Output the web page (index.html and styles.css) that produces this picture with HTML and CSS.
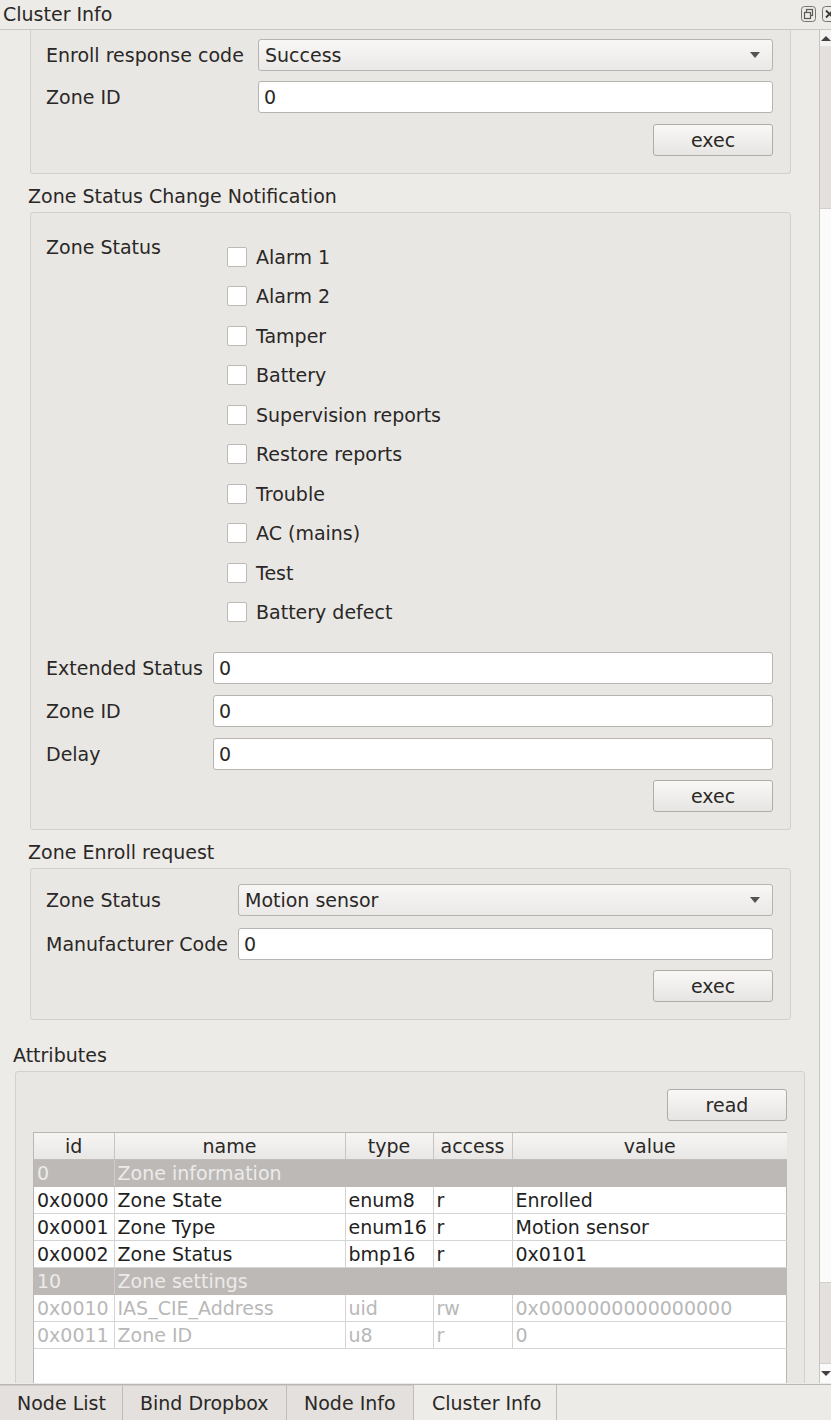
FILE: index.html
```html
<!DOCTYPE html>
<html>
<head>
<meta charset="utf-8">
<link rel="stylesheet" href="styles.css">
</head>
<body>
<div class="app">
  <div class="titlebar">
    <span class="title">Cluster Info</span>
    <div class="tb-icons">
      <svg class="tb-icon" viewBox="0 0 15 16" width="15" height="16">
        <rect x="0.5" y="0.5" width="14" height="15" rx="3" fill="none" stroke="#757270" stroke-width="1"/>
        <rect x="5.5" y="3.5" width="6" height="6" fill="none" stroke="#5a5856" stroke-width="1.2"/>
        <rect x="3.5" y="6.5" width="6" height="6" fill="#edebe8" stroke="#5a5856" stroke-width="1.2"/>
      </svg>
      <svg class="tb-icon" viewBox="0 0 15 16" width="15" height="16">
        <rect x="0.5" y="0.5" width="14" height="15" rx="3" fill="none" stroke="#757270" stroke-width="1"/>
        <path d="M4 4.5 L11 11.5 M11 4.5 L4 11.5" stroke="#3a3836" stroke-width="1.8"/>
      </svg>
    </div>
  </div>
  <div class="main">
    <div class="scrollarea">
      <div class="commands">
        <div class="group group-first">
          <div class="form-row">
            <span class="lbl lbl-w1">Enroll response code</span>
            <div class="combo"><span>Success</span><span class="arrow"></span></div>
          </div>
          <div class="form-row gap10">
            <span class="lbl lbl-w1">Zone ID</span>
            <div class="input">0</div>
          </div>
          <div class="btn-row gap11"><div class="btn">exec</div></div>
        </div>

        <div class="gtitle">Zone Status Change Notification</div>
        <div class="group group-2">
          <div class="status-row">
            <span class="lbl lbl-status">Zone Status</span>
            <div class="checklist">
              <div class="chk"><span class="box"></span>Alarm 1</div>
              <div class="chk"><span class="box"></span>Alarm 2</div>
              <div class="chk"><span class="box"></span>Tamper</div>
              <div class="chk"><span class="box"></span>Battery</div>
              <div class="chk"><span class="box"></span>Supervision reports</div>
              <div class="chk"><span class="box"></span>Restore reports</div>
              <div class="chk"><span class="box"></span>Trouble</div>
              <div class="chk"><span class="box"></span>AC (mains)</div>
              <div class="chk"><span class="box"></span>Test</div>
              <div class="chk"><span class="box"></span>Battery defect</div>
            </div>
          </div>
          <div class="form-row gap20">
            <span class="lbl lbl-w2">Extended Status</span>
            <div class="input">0</div>
          </div>
          <div class="form-row gap11">
            <span class="lbl lbl-w2">Zone ID</span>
            <div class="input">0</div>
          </div>
          <div class="form-row gap11">
            <span class="lbl lbl-w2">Delay</span>
            <div class="input">0</div>
          </div>
          <div class="btn-row gap10"><div class="btn">exec</div></div>
        </div>

        <div class="gtitle">Zone Enroll request</div>
        <div class="group group-3">
          <div class="form-row">
            <span class="lbl lbl-w3">Zone Status</span>
            <div class="combo"><span>Motion sensor</span><span class="arrow"></span></div>
          </div>
          <div class="form-row gap12">
            <span class="lbl lbl-w3">Manufacturer Code</span>
            <div class="input">0</div>
          </div>
          <div class="btn-row gap10"><div class="btn">exec</div></div>
        </div>
      </div>

      <div class="gtitle attr-title">Attributes</div>
      <div class="group group-attr">
        <div class="btn-row"><div class="btn">read</div></div>
        <div class="table-wrap">
          <table class="attr-table">
            <colgroup>
              <col class="c-id"><col class="c-name"><col class="c-type"><col class="c-access"><col class="c-value">
            </colgroup>
            <thead>
              <tr><th>id</th><th>name</th><th>type</th><th>access</th><th>value</th></tr>
            </thead>
            <tbody>
              <tr class="grp"><td>0</td><td colspan="4">Zone information</td></tr>
              <tr><td>0x0000</td><td>Zone State</td><td>enum8</td><td>r</td><td>Enrolled</td></tr>
              <tr><td>0x0001</td><td>Zone Type</td><td>enum16</td><td>r</td><td>Motion sensor</td></tr>
              <tr><td>0x0002</td><td>Zone Status</td><td>bmp16</td><td>r</td><td>0x0101</td></tr>
              <tr class="grp"><td>10</td><td colspan="4">Zone settings</td></tr>
              <tr class="dis"><td>0x0010</td><td>IAS_CIE_Address</td><td>uid</td><td>rw</td><td>0x0000000000000000</td></tr>
              <tr class="dis"><td>0x0011</td><td>Zone ID</td><td>u8</td><td>r</td><td>0</td></tr>
            </tbody>
          </table>
        </div>
      </div>
    </div>
    <div class="vscroll">
      <div class="sb-up"><span class="tri-up"></span></div>
      <div class="sb-handle"></div>
      <div class="sb-track"></div>
      <div class="sb-handle2"></div>
      <div class="sb-down"><span class="tri-down"></span></div>
    </div>
  </div>
  <div class="tabbar">
    <div class="tab tab-1">Node List</div>
    <div class="tab tab-2">Bind Dropbox</div>
    <div class="tab tab-3">Node Info</div>
    <div class="tab tab-sel">Cluster Info</div>
    <div class="tab-rest"></div>
  </div>
</div>
</body>
</html>
```

FILE: styles.css
```css
html, body {
  margin: 0;
  padding: 0;
}
body {
  background: #edebe8;
  font-family: "DejaVu Sans", sans-serif;
  font-size: 19px;
  color: #2a2826;
  width: 831px;
  height: 1420px;
  overflow: hidden;
}
.app {
  display: flex;
  flex-direction: column;
  height: 1420px;
}
.titlebar {
  height: 29px;
  border-bottom: 1px solid #c9c6c3;
  display: flex;
  align-items: center;
  justify-content: space-between;
  flex: none;
}
.title {
  padding-left: 3px;
  line-height: 22px;
  margin-top: -2px;
  white-space: nowrap;
}
.tb-icons {
  display: flex;
  gap: 6px;
  margin-right: -6px;
  margin-top: -2px;
}
.tb-icon {
  display: block;
}
.main {
  display: flex;
  height: 1353px;
  flex: none;
}
.scrollarea {
  width: 819px;
  height: 1353px;
  overflow: hidden;
  flex: none;
}
.commands {
  margin-left: 30px;
  width: 761px;
}
.group {
  border: 1px solid #d3d0cd;
  border-radius: 3px;
  background: #e9e7e4;
  box-sizing: border-box;
}
.group-first {
  border-top: none;
  border-top-left-radius: 0;
  border-top-right-radius: 0;
  padding: 9px 17px 17px 15px;
}
.group-2 {
  padding: 23px 17px 17px 15px;
}
.group-3 {
  padding: 15px 17px 17px 15px;
}
.gtitle {
  padding: 11px 0 5px 0;
  line-height: 22px;
  margin-left: -2px;
  white-space: nowrap;
}
.attr-title {
  margin-left: 13px;
  padding-top: 24px;
  padding-bottom: 5px;
}
.form-row {
  display: flex;
  align-items: center;
  height: 32px;
}
.gap10 { margin-top: 10px; }
.gap11 { margin-top: 11px; }
.gap12 { margin-top: 12px; }
.gap20 { margin-top: 20px; }
.lbl {
  flex: none;
  line-height: 22px;
  white-space: nowrap;
}
.lbl-w1 { width: 212px; }
.lbl-w2 { width: 167px; }
.lbl-w3 { width: 192px; }
.lbl-status { width: 181px; }
.combo {
  flex: 1;
  height: 32px;
  box-sizing: border-box;
  border: 1px solid #b6b3b0;
  border-radius: 3px;
  background: linear-gradient(#f8f7f6, #ebe9e7);
  display: flex;
  align-items: center;
  justify-content: space-between;
  padding: 0 12px 0 6px;
}
.arrow {
  width: 0;
  height: 0;
  border-left: 5px solid transparent;
  border-right: 5px solid transparent;
  border-top: 6px solid #555350;
}
.input {
  flex: 1;
  height: 32px;
  box-sizing: border-box;
  border: 1px solid #b6b3b0;
  border-radius: 3px;
  background: #ffffff;
  display: flex;
  align-items: center;
  padding-left: 5px;
}
.btn-row {
  display: flex;
  justify-content: flex-end;
}
.btn {
  width: 120px;
  height: 32px;
  box-sizing: border-box;
  border: 1px solid #b0ada9;
  border-radius: 3px;
  background: linear-gradient(#f9f8f7, #e7e5e3);
  display: flex;
  align-items: center;
  justify-content: center;
}
.status-row {
  display: flex;
  align-items: flex-start;
}
.checklist {
  margin-top: 1px;
  display: flex;
  flex-direction: column;
}
.chk {
  height: 39.5px;
  display: flex;
  align-items: center;
  line-height: 22px;
  white-space: nowrap;
}
.box {
  width: 20px;
  height: 20px;
  box-sizing: border-box;
  border: 1px solid #bcb9b6;
  border-radius: 2px;
  background: #ffffff;
  margin-right: 9px;
  flex: none;
}
.group-attr {
  margin-left: 15px;
  width: 790px;
  height: 600px;
  padding: 17px 17px 0 17px;
}
.table-wrap {
  margin-top: 11px;
  background: #ffffff;
  border: 1px solid #b9b6b3;
  border-bottom: none;
  height: 600px;
}
.attr-table {
  border-collapse: collapse;
  table-layout: fixed;
  width: 753px;
}
.c-id { width: 80px; }
.c-name { width: 231px; }
.c-type { width: 88px; }
.c-access { width: 79px; }
.c-value { width: 275px; }
.attr-table th {
  height: 26px;
  padding: 0;
  font-weight: normal;
  text-align: center;
  background: linear-gradient(#f6f5f4, #e9e7e5);
  border-right: 1px solid #c7c4c1;
  border-bottom: 1px solid #c0bdba;
  line-height: 22px;
}
.attr-table th:last-child { border-right: none; }
.attr-table td {
  height: 26px;
  padding: 0 0 0 3px;
  border-right: 1px solid #d4d4d4;
  border-bottom: 1px solid #d4d4d4;
  white-space: nowrap;
  overflow: hidden;
  line-height: 22px;
  color: #1f1f1f;
}
.attr-table td:last-child { border-right: none; }
.attr-table tr.grp td {
  background: #bdb9b7;
  color: #ecebea;
  border-bottom: 1px solid #bdb9b7;
  border-right: 1px solid #cfcccb;
}
.attr-table tr.grp td:last-child { border-right: none; }
.attr-table tr.dis td {
  color: #b8b8b8;
}
.vscroll {
  width: 12px;
  border-left: 1px solid #c6c3c0;
  display: flex;
  flex-direction: column;
  flex: none;
  background: #fbfbfb;
}
.sb-up {
  height: 16px;
  display: flex;
  justify-content: center;
  align-items: center;
  background: #f4f3f2;
}
.tri-up {
  width: 0; height: 0;
  border-left: 5px solid transparent;
  border-right: 5px solid transparent;
  border-bottom: 5px solid #444240;
}
.sb-handle {
  height: 162px;
  background: #e3e0de;
  border-bottom: 1px solid #d3d0ce;
}
.sb-track {
  flex: 1;
  background: #fbfbfb;
}
.sb-handle2 {
  height: 80px;
  background: #e3e0de;
  border-top: 1px solid #d3d0ce;
  border-bottom: 1px solid #d3d0ce;
}
.sb-down {
  height: 19px;
  display: flex;
  justify-content: center;
  align-items: center;
  background: #fbfbfb;
}
.tri-down {
  width: 0; height: 0;
  border-left: 5px solid transparent;
  border-right: 5px solid transparent;
  border-top: 5px solid #444240;
}
.tabbar {
  flex: 1;
  display: flex;
  border-top: 1px solid #b9b6b3;
  margin-top: 1px;
}
.tab {
  box-sizing: border-box;
  padding: 0 0 1px 17px;
  display: flex;
  align-items: center;
  background: #e3e0dd;
  border-right: 1px solid #bfbcb9;
  border-top: 1px solid #cfccc9;
  line-height: 22px;
  white-space: nowrap;
  flex: none;
}
.tab-1 { width: 123px; }
.tab-2 { width: 164px; }
.tab-3 { width: 127px; }
.tab-sel {
  width: 143px;
  background: #eeece9;
  padding-left: 18px;
  padding-bottom: 0;
  border-top: none;
}
.tab-rest {
  flex: 1;
  background: #edebe8;
}
```
